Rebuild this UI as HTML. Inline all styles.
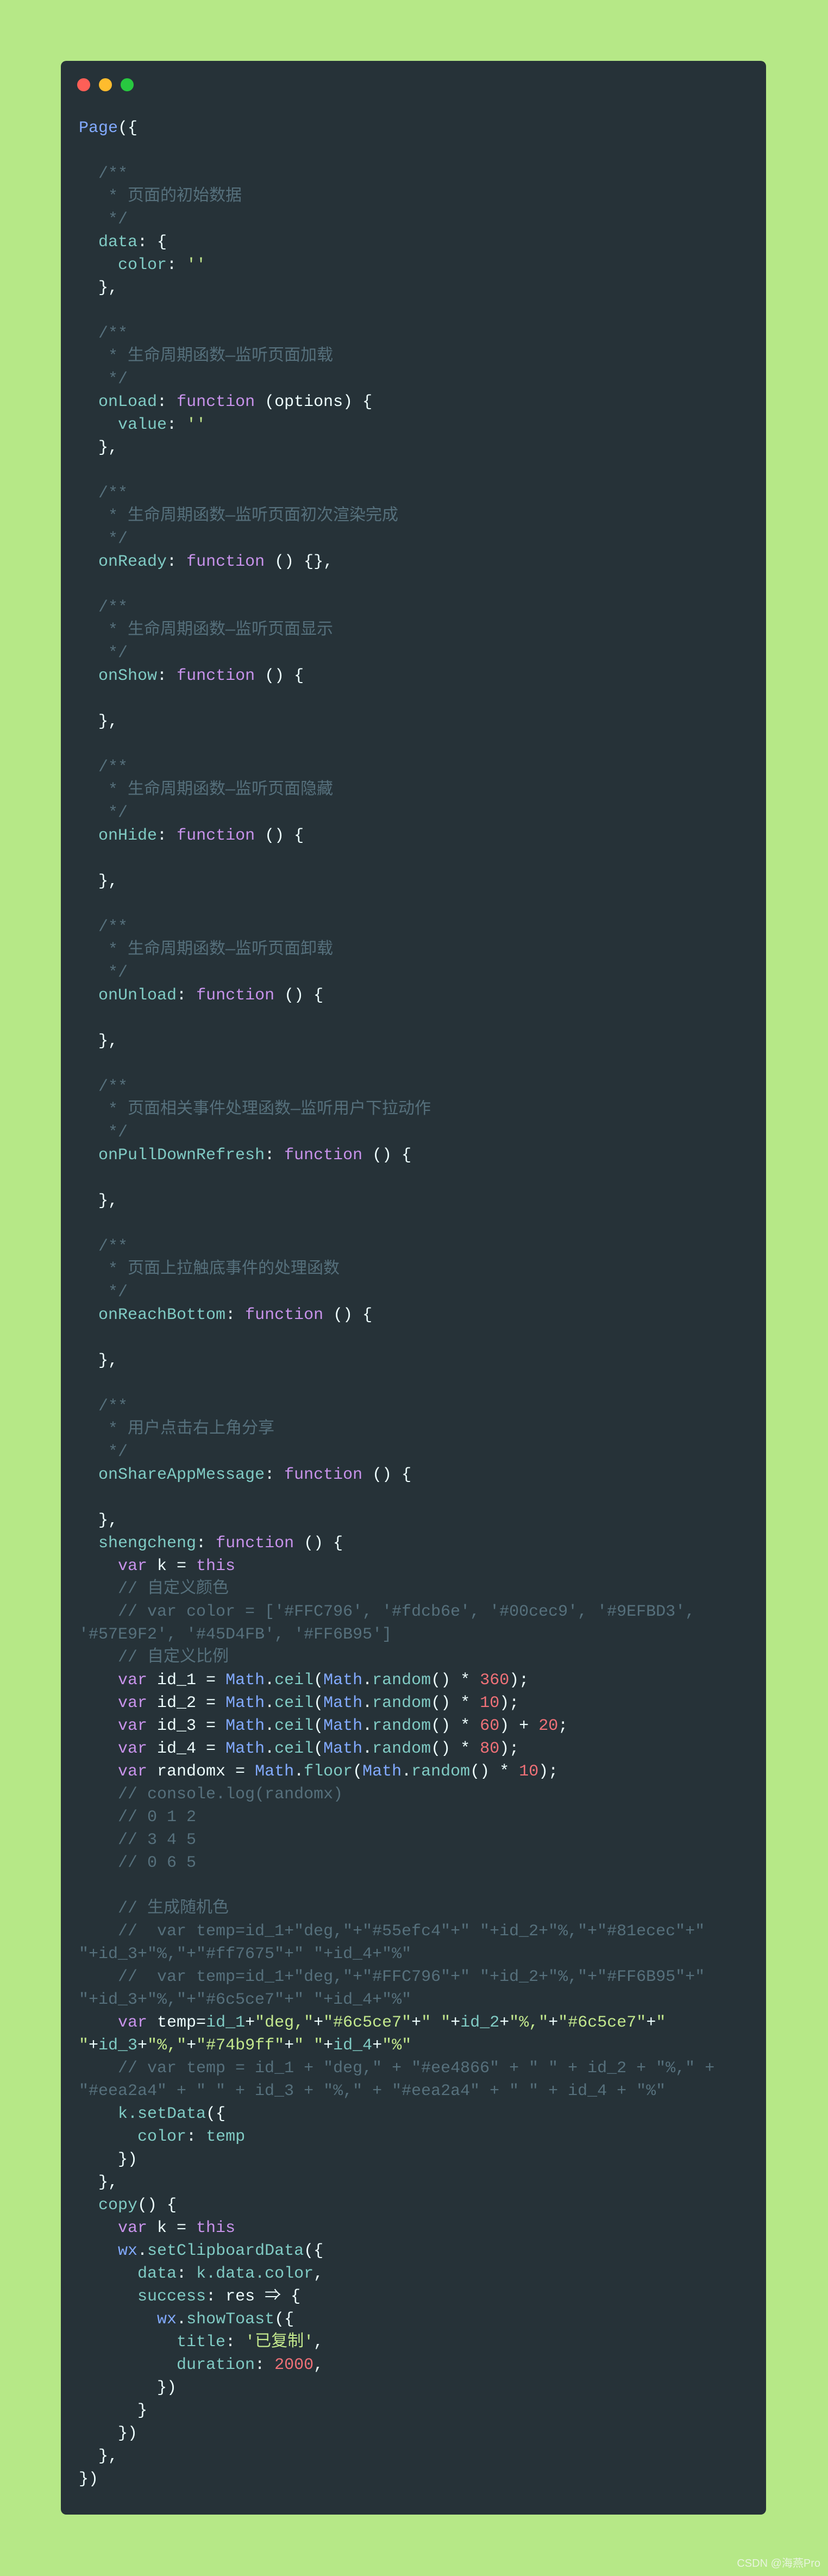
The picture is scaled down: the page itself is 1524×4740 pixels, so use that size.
<!DOCTYPE html>
<html><head><meta charset="utf-8">
<style>
html,body{margin:0;padding:0;}
body{width:1524px;height:4740px;background:#b6e887;position:relative;overflow:hidden;}
.card{position:absolute;left:112px;top:112px;width:1298px;height:4515px;background:#263238;border-radius:10px;}
.dot{position:absolute;top:144px;width:24px;height:24px;border-radius:50%;}
pre{position:absolute;left:145px;top:215px;margin:0;font-family:"Liberation Mono","Noto Sans CJK SC",monospace;font-size:30px;line-height:42px;color:#eeffff;white-space:pre;}
.c{color:#56707c}.k{color:#c792ea}.p{color:#80cbc4}.b{color:#82aaff}.s{color:#c3e88d}.n{color:#f07178}
.wm{position:absolute;right:14px;top:4700px;font-family:"Liberation Sans","Noto Sans CJK SC",sans-serif;font-size:20px;color:#e8f4df;}
</style></head><body>
<div class="card"></div>
<div class="dot" style="left:142px;background:#fe5f57"></div>
<div class="dot" style="left:182px;background:#febc2e"></div>
<div class="dot" style="left:222px;background:#28c840"></div>
<pre><span class="b">Page</span>({

  <span class="c">/**
   * 页面的初始数据
   */</span>
  <span class="p">data</span>: {
    <span class="p">color</span>: <span class="s">''</span>
  },

  <span class="c">/**
   * 生命周期函数—监听页面加载
   */</span>
  <span class="p">onLoad</span>: <span class="k">function</span> (options) {
    <span class="p">value</span>: <span class="s">''</span>
  },

  <span class="c">/**
   * 生命周期函数—监听页面初次渲染完成
   */</span>
  <span class="p">onReady</span>: <span class="k">function</span> () {},

  <span class="c">/**
   * 生命周期函数—监听页面显示
   */</span>
  <span class="p">onShow</span>: <span class="k">function</span> () {

  },

  <span class="c">/**
   * 生命周期函数—监听页面隐藏
   */</span>
  <span class="p">onHide</span>: <span class="k">function</span> () {

  },

  <span class="c">/**
   * 生命周期函数—监听页面卸载
   */</span>
  <span class="p">onUnload</span>: <span class="k">function</span> () {

  },

  <span class="c">/**
   * 页面相关事件处理函数—监听用户下拉动作
   */</span>
  <span class="p">onPullDownRefresh</span>: <span class="k">function</span> () {

  },

  <span class="c">/**
   * 页面上拉触底事件的处理函数
   */</span>
  <span class="p">onReachBottom</span>: <span class="k">function</span> () {

  },

  <span class="c">/**
   * 用户点击右上角分享
   */</span>
  <span class="p">onShareAppMessage</span>: <span class="k">function</span> () {

  },
  <span class="p">shengcheng</span>: <span class="k">function</span> () {
    <span class="k">var</span> k = <span class="k">this</span>
    <span class="c">// 自定义颜色</span>
    <span class="c">// var color = ['#FFC796', '#fdcb6e', '#00cec9', '#9EFBD3',</span>
<span class="c">'#57E9F2', '#45D4FB', '#FF6B95']</span>
    <span class="c">// 自定义比例</span>
    <span class="k">var</span> id_1 = <span class="b">Math</span>.<span class="p">ceil</span>(<span class="b">Math</span>.<span class="p">random</span>() * <span class="n">360</span>);
    <span class="k">var</span> id_2 = <span class="b">Math</span>.<span class="p">ceil</span>(<span class="b">Math</span>.<span class="p">random</span>() * <span class="n">10</span>);
    <span class="k">var</span> id_3 = <span class="b">Math</span>.<span class="p">ceil</span>(<span class="b">Math</span>.<span class="p">random</span>() * <span class="n">60</span>) + <span class="n">20</span>;
    <span class="k">var</span> id_4 = <span class="b">Math</span>.<span class="p">ceil</span>(<span class="b">Math</span>.<span class="p">random</span>() * <span class="n">80</span>);
    <span class="k">var</span> randomx = <span class="b">Math</span>.<span class="p">floor</span>(<span class="b">Math</span>.<span class="p">random</span>() * <span class="n">10</span>);
    <span class="c">// console.log(randomx)</span>
    <span class="c">// 0 1 2</span>
    <span class="c">// 3 4 5</span>
    <span class="c">// 0 6 5</span>

    <span class="c">// 生成随机色</span>
    <span class="c">//  var temp=id_1+"deg,"+"#55efc4"+" "+id_2+"%,"+"#81ecec"+"</span>
<span class="c">"+id_3+"%,"+"#ff7675"+" "+id_4+"%"</span>
    <span class="c">//  var temp=id_1+"deg,"+"#FFC796"+" "+id_2+"%,"+"#FF6B95"+"</span>
<span class="c">"+id_3+"%,"+"#6c5ce7"+" "+id_4+"%"</span>
    <span class="k">var</span> temp=<span class="p">id_1</span>+<span class="s">"deg,"</span>+<span class="s">"#6c5ce7"</span>+<span class="s">" "</span>+<span class="p">id_2</span>+<span class="s">"%,"</span>+<span class="s">"#6c5ce7"</span>+<span class="s">"</span>
<span class="s">"</span>+<span class="p">id_3</span>+<span class="s">"%,"</span>+<span class="s">"#74b9ff"</span>+<span class="s">" "</span>+<span class="p">id_4</span>+<span class="s">"%"</span>
    <span class="c">// var temp = id_1 + "deg," + "#ee4866" + " " + id_2 + "%," +</span>
<span class="c">"#eea2a4" + " " + id_3 + "%," + "#eea2a4" + " " + id_4 + "%"</span>
    <span class="p">k.setData</span>({
      <span class="p">color</span>: <span class="p">temp</span>
    })
  },
  <span class="p">copy</span>() {
    <span class="k">var</span> k = <span class="k">this</span>
    <span class="b">wx</span>.<span class="p">setClipboardData</span>({
      <span class="p">data</span>: <span class="p">k.data.color</span>,
      <span class="p">success</span>: res ⇒ {
        <span class="b">wx</span>.<span class="p">showToast</span>({
          <span class="p">title</span>: <span class="s">'已复制'</span>,
          <span class="p">duration</span>: <span class="n">2000</span>,
        })
      }
    })
  },
})</pre>
<div class="wm">CSDN @海燕Pro</div>
</body></html>
